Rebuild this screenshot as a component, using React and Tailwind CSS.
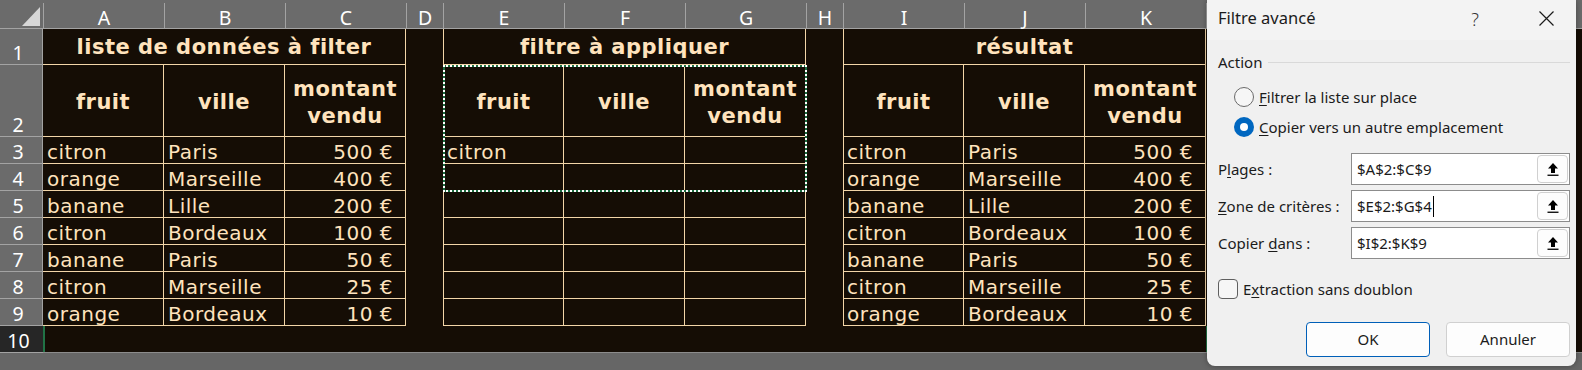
const cream = "border-[#f2d5a8]";

const rows = [
  ["citron", "Paris", "500 €"],
  ["orange", "Marseille", "400 €"],
  ["banane", "Lille", "200 €"],
  ["citron", "Bordeaux", "100 €"],
  ["banane", "Paris", "50 €"],
  ["citron", "Marseille", "25 €"],
  ["orange", "Bordeaux", "10 €"],
];

const letters = ["A", "B", "C", "D", "E", "F", "G", "H", "I", "J", "K", ""];

function ColHead({ children }) {
  return (
    <div className="pt-[3px] border-b border-[#a3a3a3] bg-[#6b6b6b]">
      <div className="h-full border-l border-[#a3a3a3] flex items-end justify-center pb-[1px] text-[19.5px] leading-none text-white">
        {children}
      </div>
    </div>
  );
}

function RowHead({ n, active }) {
  return (
    <div
      className={
        active
          ? "bg-[#262626] border-b border-[#a3a3a3] flex items-end justify-center pr-[6px] pb-[2px] text-[19.5px] leading-none text-white font-['Noto_Sans',sans-serif]"
          : "bg-[#6b6b6b] border-b border-r border-[#a3a3a3] flex items-end justify-center pr-[6px] pb-[2px] text-[19.5px] leading-none text-white font-['Noto_Sans',sans-serif]"
      }
    >
      {n}
    </div>
  );
}

function Title({ children, first }) {
  return (
    <div
      className={`col-span-3 border-r border-b ${cream} ${first ? "border-l" : ""} flex items-end justify-center pb-[6px] font-bold text-[21px] tracking-[0.5px] leading-none whitespace-nowrap`}
    >
      {children}
    </div>
  );
}

function Heads({ first }) {
  return (
    <>
      <div className={`border-r border-b ${cream} ${first ? "border-l" : ""} flex items-center justify-center pt-[4px] font-bold text-[21px] tracking-[0.5px] leading-[27px]`}>
        fruit
      </div>
      <div className={`border-r border-b ${cream} flex items-center justify-center pt-[4px] font-bold text-[21px] tracking-[0.5px] leading-[27px]`}>
        ville
      </div>
      <div className={`border-r border-b ${cream} flex items-center justify-center text-center pt-[4px] font-bold text-[21px] tracking-[0.5px] leading-[27px]`}>
        montant
        <br />
        vendu
      </div>
    </>
  );
}

function DataCells({ row, first }) {
  return (
    <>
      <div className={`border-r border-b ${cream} ${first ? "border-l pl-[3px]" : "pl-[4px]"} flex items-end pb-[1px] text-[20px] tracking-[0.5px] leading-none whitespace-nowrap`}>
        {row[0]}
      </div>
      <div className={`border-r border-b ${cream} flex items-end pl-[4px] pb-[1px] text-[20px] tracking-[0.5px] leading-none whitespace-nowrap`}>
        {row[1]}
      </div>
      <div className={`border-r border-b ${cream} flex items-end justify-end pr-[12px] pb-[1px] text-[20px] tracking-[0.5px] leading-none whitespace-nowrap`}>
        {row[2]}
      </div>
    </>
  );
}

function UpArrow() {
  return (
    <svg width="12" height="15" viewBox="0 0 12 15" fill="#000">
      <path d="M6 1 L11 6.5 H8 V11 H4 V6.5 H1 Z" />
      <rect x="0.5" y="12.6" width="11" height="1.3" />
    </svg>
  );
}

function RefInput({ label, value, caret }) {
  return (
    <div className="flex items-center h-[32px]">
      <span className="w-[133px] leading-none">{label}</span>
      <div className="w-[219px] h-full bg-white border border-[#8c8c8c] flex items-center pl-[5px] pr-[1px]">
        <span className="leading-none">{value}</span>
        {caret && <span className="ml-[1px] w-px h-[21px] bg-black" />}
        <div className="ml-auto w-[31px] h-[28px] border border-[#d0d0d0] rounded-[4px] bg-[#fdfdfd] flex items-center justify-center">
          <UpArrow />
        </div>
      </div>
    </div>
  );
}

function Dialog() {
  return (
    <div className="absolute left-[1207px] top-0 w-[369px] h-[366px] bg-[#f0f0f0] rounded-b-[8px] shadow-[0_0_6px_rgba(0,0,0,0.35)] font-['Noto_Sans',sans-serif] text-[15px] text-[#1b1b1b] flex flex-col">
      <div className="h-[40px] bg-[#f3f3f3] flex items-center pl-[11px] pb-[3px]">
        <span className="text-[16.5px] leading-none">Filtre avancé</span>
        <span className="ml-auto text-[18px] font-light leading-none text-[#333]">?</span>
        <svg className="ml-[60px] mr-[22px]" width="15" height="15" viewBox="0 0 15 15" stroke="#1b1b1b" strokeWidth="1.2">
          <path d="M0.5 0.5 L14.5 14.5 M14.5 0.5 L0.5 14.5" />
        </svg>
      </div>
      <div className="flex flex-col pl-[11px] pr-[6px]">
        <div className="mt-[12px] h-[20px] flex items-center gap-[6px]">
          <span className="leading-none">Action</span>
          <div className="flex-1 h-px bg-[#d9d9d9]" />
        </div>
        <div className="mt-[15px] h-[20px] flex items-center pl-[16px] gap-[5px]">
          <span className="w-[20px] h-[20px] rounded-full border border-[#6a6a6a] bg-[#f6f6f6]" />
          <span className="leading-none">
            <u className="underline-offset-2">F</u>iltrer la liste sur place
          </span>
        </div>
        <div className="mt-[10px] h-[20px] flex items-center pl-[16px] gap-[5px]">
          <span className="w-[20px] h-[20px] rounded-full bg-[#0067c0] flex items-center justify-center">
            <span className="w-[8px] h-[8px] rounded-full bg-white" />
          </span>
          <span className="leading-none">
            <u className="underline-offset-2">C</u>opier vers un autre emplacement
          </span>
        </div>
        <div className="mt-[16px]">
          <RefInput
            label={
              <>
                P<u className="underline-offset-2">l</u>ages :
              </>
            }
            value="$A$2:$C$9"
          />
        </div>
        <div className="mt-[5px]">
          <RefInput
            label={
              <>
                <u className="underline-offset-2">Z</u>one de critères :
              </>
            }
            value="$E$2:$G$4"
            caret
          />
        </div>
        <div className="mt-[5px]">
          <RefInput
            label={
              <>
                Copier <u className="underline-offset-2">d</u>ans :
              </>
            }
            value="$I$2:$K$9"
          />
        </div>
        <div className="mt-[20px] h-[20px] flex items-center gap-[5px]">
          <span className="w-[20px] h-[20px] rounded-[4px] border border-[#5f5f5f] bg-[#f6f6f6]" />
          <span className="leading-none">
            E<u className="underline-offset-2">x</u>traction sans doublon
          </span>
        </div>
        <div className="mt-[23px] flex justify-end gap-[16px]">
          <button className="w-[124px] h-[35px] rounded-[4px] border border-[#005fb8] bg-[#fdfdfd] leading-none">
            OK
          </button>
          <button className="w-[124px] h-[35px] rounded-[4px] border border-[#d0d0d0] bg-[#fdfdfd] leading-none">
            Annuler
          </button>
        </div>
      </div>
    </div>
  );
}

export default function App() {
  return (
    <div className="relative w-[1582px] h-[370px] overflow-hidden bg-[#666666] font-['Noto_Sans',sans-serif]">
      <div className="grid grid-cols-[43px_121px_121px_121px_37px_121px_121px_121px_37px_121px_121px_121px_1fr] grid-rows-[29px_36px_72px_repeat(8,27px)] text-[#ffe3bd] font-['DejaVu_Sans',sans-serif]">
        {/* column headers */}
        <div className="bg-[#6b6b6b] border-b border-[#a3a3a3] relative">
          <svg className="absolute left-[22px] top-[7px]" width="18" height="19" viewBox="0 0 18 19">
            <path d="M18 0 L18 19 L0 19 Z" fill="#d6d6d6" />
          </svg>
        </div>
        {letters.map((l, i) => (
          <ColHead key={i}>
            <span className="font-['Noto_Sans',sans-serif]">{l}</span>
          </ColHead>
        ))}

        {/* row 1 */}
        <RowHead n="1" />
        <div className="bg-[#150d05] col-span-12 grid grid-cols-subgrid">
          <Title>liste de données à filter</Title>
          <div />
          <Title first>filtre à appliquer</Title>
          <div />
          <Title first>résultat</Title>
          <div />
        </div>

        {/* row 2 */}
        <RowHead n="2" />
        <div className="bg-[#150d05] col-span-12 grid grid-cols-subgrid">
          <Heads />
          <div />
          <Heads first />
          <div />
          <Heads first />
          <div />
        </div>

        {/* rows 3 - 9 */}
        {rows.map((r, i) => (
          <div key={i} className="contents">
            <RowHead n={String(i + 3)} />
            <div className="bg-[#150d05] col-span-12 grid grid-cols-subgrid">
              <DataCells row={r} />
              <div />
              <DataCells row={i === 0 ? ["citron", "", ""] : ["", "", ""]} first />
              <div />
              <DataCells row={r} first />
              <div />
            </div>
          </div>
        ))}

        {/* row 10 */}
        <RowHead n="10" active />
        <div className="bg-[#150d05] col-span-12 border-b border-[#8c8c8c] flex">
          <div className="w-[2px] h-full bg-[#217346]" />
          <div className="ml-[1161px] w-[2px] h-full bg-[#217346]" />
        </div>
      </div>

      {/* copy selection marquee */}
      <div className="absolute left-[443px] top-[65px] w-[364px] h-[127px] border-2 border-[#1a6b3f]" />
      <div className="absolute left-[443px] top-[65px] w-[364px] h-[127px] border-2 border-dotted border-white" />

      <Dialog />
    </div>
  );
}
